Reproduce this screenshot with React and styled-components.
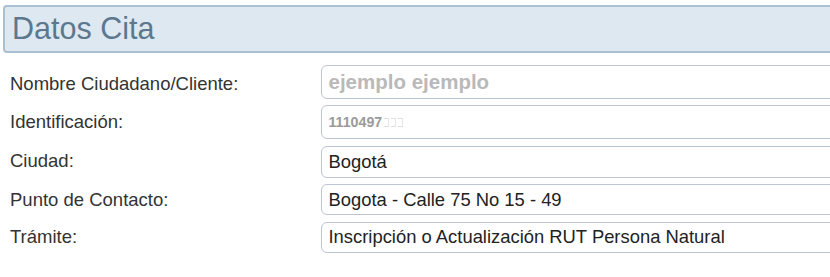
import React from "react";
import styled, { createGlobalStyle } from "styled-components";

const Global = createGlobalStyle`
  html, body { margin: 0; padding: 0; background: #ffffff; }
  body { font-family: "Liberation Sans", Arial, sans-serif; overflow: hidden; }
`;

const Page = styled.div`
  width: 830px;
  height: 277px;
  padding: 5px 0 0 3px;
  box-sizing: border-box;
  overflow: hidden;
`;

const Header = styled.div`
  width: 850px;
  height: 48px;
  box-sizing: border-box;
  background: #dee8f0;
  border: 2px solid #a9c0d2;
  border-radius: 4px;
  display: flex;
  align-items: center;
  padding-left: 7px;
`;

const Title = styled.h2`
  margin: 0;
  font-family: "Liberation Sans", Arial, sans-serif;
  font-weight: normal;
  font-size: 30.5px;
  color: #5b788e;
  line-height: 1;
  margin-top: -1px;
`;

const Form = styled.div`
  display: grid;
  grid-template-columns: 318px 520px;
  row-gap: 6.5px;
  margin-top: 11.5px;
`;

const Label = styled.div`
  display: flex;
  align-items: center;
  padding-left: 7px;
  font-size: 18.5px;
  color: #333333;
  margin-top: ${(p) => p.$shift || 0}px;
`;

const Field = styled.div`
  height: ${(p) => p.$h}px;
  box-sizing: border-box;
  border: 1.5px solid #bcc5d4;
  border-radius: 6px;
  background: #ffffff;
  display: flex;
  align-items: center;
  padding-left: 6.5px;
  font-size: ${(p) => p.$size}px;
  font-weight: ${(p) => (p.$bold ? "bold" : "normal")};
  color: ${(p) => p.$color};
  white-space: nowrap;
`;

const Masked = styled.span`
  display: inline-block;
  width: 5px;
  height: 9px;
  margin-left: 2px;
  border-top: 1.5px solid #e0e0e0;
  border-bottom: 1.5px solid #e0e0e0;
  border-right: 1.5px solid #e6e6e6;
  box-sizing: border-box;
`;

const rows = [
  { label: "Nombre Ciudadano/Cliente:", value: "ejemplo ejemplo", h: 34, size: 20.5, bold: true, color: "#b9b9b9", shift: 4 },
  { label: "Identificación:", value: "1110497", h: 34, size: 14.2, bold: true, color: "#9a9a9a", masked: true, shift: -1 },
  { label: "Ciudad:", value: "Bogotá", h: 32, size: 18.4, color: "#222222", shift: -2 },
  { label: "Punto de Contacto:", value: "Bogota - Calle 75 No 15 - 49", h: 31, size: 18.4, color: "#222222", shift: 0 },
  { label: "Trámite:", value: "Inscripción o Actualización RUT Persona Natural", h: 31, size: 18.4, color: "#222222", shift: 0 },
];

export default function App() {
  return (
    <>
      <Global />
      <Page>
        <Header>
          <Title>Datos Cita</Title>
        </Header>
        <Form>
          {rows.map((r) => (
            <React.Fragment key={r.label}>
              <Label $shift={r.shift}>{r.label}</Label>
              <Field $h={r.h} $size={r.size} $bold={r.bold} $color={r.color}>
                {r.value}
                {r.masked && (
                  <>
                    <Masked />
                    <Masked />
                    <Masked />
                  </>
                )}
              </Field>
            </React.Fragment>
          ))}
        </Form>
      </Page>
    </>
  );
}
